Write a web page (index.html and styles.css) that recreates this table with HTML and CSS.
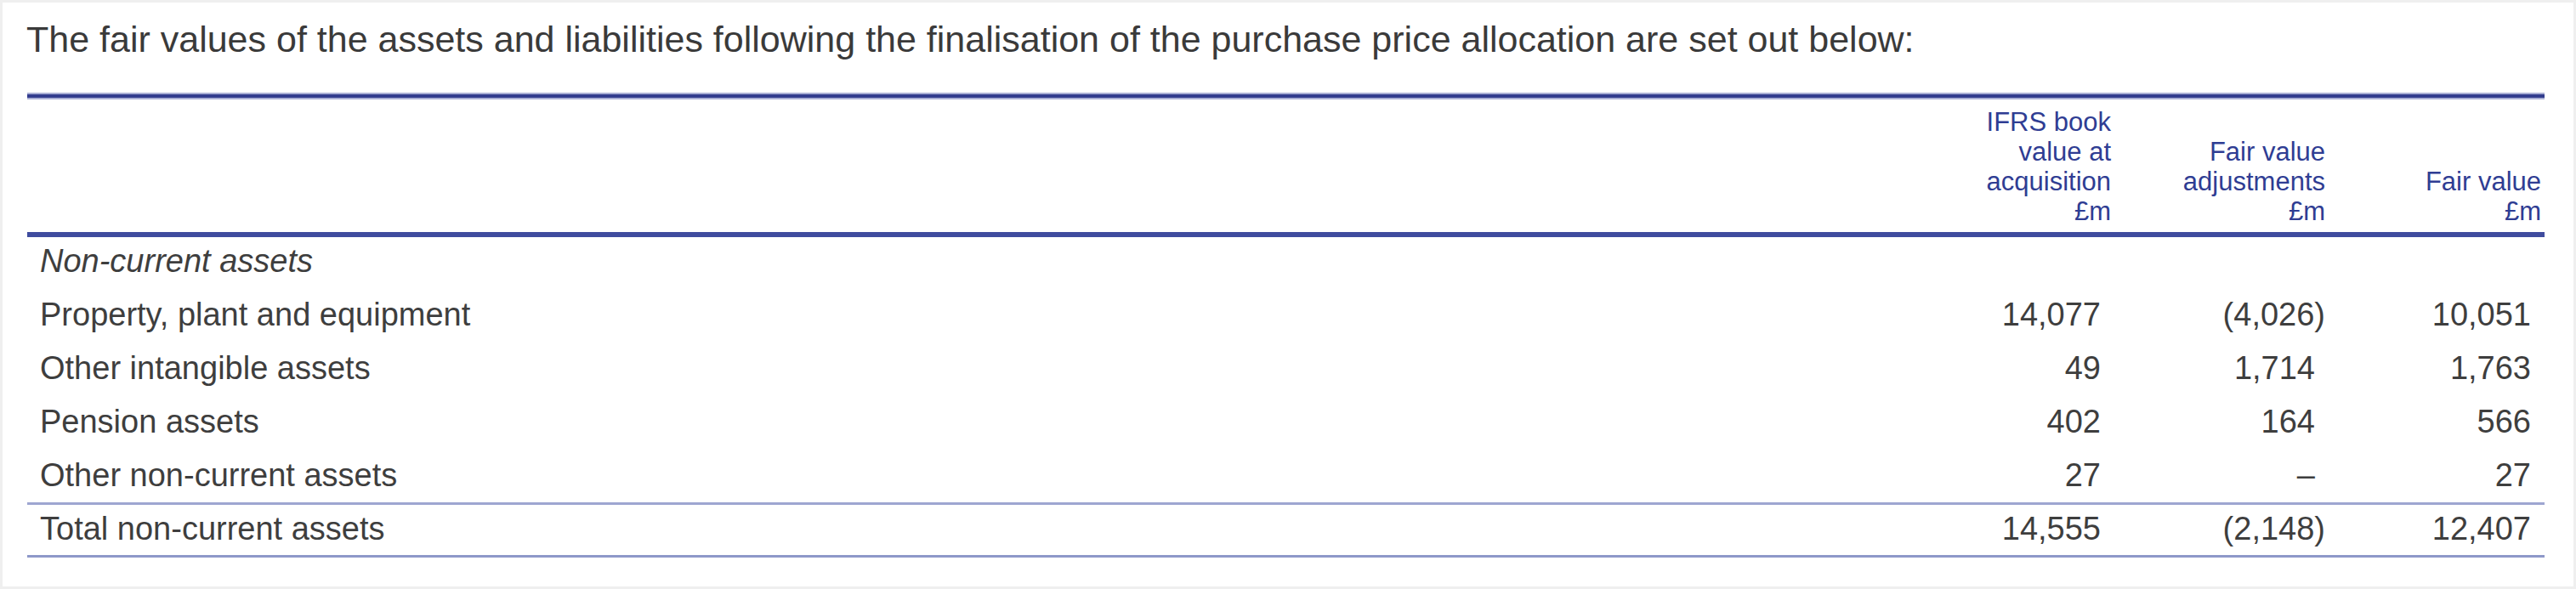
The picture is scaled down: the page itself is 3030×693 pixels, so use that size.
FILE: index.html
```html
<!DOCTYPE html>
<html lang="en">
<head>
<meta charset="utf-8">
<title>Purchase price allocation</title>
<link rel="stylesheet" href="styles.css">
</head>
<body>
<div class="page">
  <p class="intro">The fair values of the assets and liabilities following the finalisation of the purchase price allocation are set out below:</p>
  <div class="fv-table">
    <div class="row head">
      <div class="label"></div>
      <div class="num">IFRS book<br>value at<br>acquisition<br>£m</div>
      <div class="num">Fair value<br>adjustments<br>£m</div>
      <div class="num">Fair value<br>£m</div>
    </div>
    <div class="row section">
      <div class="label">Non-current assets</div>
      <div class="num"></div>
      <div class="num"></div>
      <div class="num"></div>
    </div>
    <div class="row">
      <div class="label">Property, plant and equipment</div>
      <div class="num">14,077</div>
      <div class="num neg">(4,026)</div>
      <div class="num">10,051</div>
    </div>
    <div class="row">
      <div class="label">Other intangible assets</div>
      <div class="num">49</div>
      <div class="num">1,714</div>
      <div class="num">1,763</div>
    </div>
    <div class="row">
      <div class="label">Pension assets</div>
      <div class="num">402</div>
      <div class="num">164</div>
      <div class="num">566</div>
    </div>
    <div class="row last">
      <div class="label">Other non-current assets</div>
      <div class="num">27</div>
      <div class="num">–</div>
      <div class="num">27</div>
    </div>
    <div class="row total">
      <div class="label">Total non-current assets</div>
      <div class="num">14,555</div>
      <div class="num neg">(2,148)</div>
      <div class="num">12,407</div>
    </div>
  </div>
</div>
</body>
</html>
```

FILE: styles.css
```css
html, body {
  margin: 0;
  padding: 0;
  background: #ffffff;
}

.page {
  box-sizing: border-box;
  width: 3030px;
  height: 693px;
  border: 3px solid #efefef;
  background: #ffffff;
  font-family: "Liberation Sans", Arial, sans-serif;
  color: #3e3e3e;
  overflow: hidden;
}

.intro {
  margin: 18px 0 0 28px;
  font-size: 43px;
  line-height: 50px;
  color: #3a3a3a;
}

.fv-table {
  margin: 40px 34px 0 29px;
}

.row {
  display: grid;
  grid-template-columns: 1fr 252px 252px 258px;
  font-size: 38px;
  line-height: 44px;
  padding: 6px 0 13px;
}

.row .label {
  padding-left: 15px;
  white-space: nowrap;
}

.row .num {
  text-align: right;
  padding-right: 12px;
  white-space: nowrap;
}

.row .num:last-child {
  padding-right: 16px;
}

.row .num.neg {
  padding-right: 0;
}

.row.head {
  font-size: 31px;
  line-height: 35px;
  color: #2f3d93;
  padding: 11px 0 7px;
  border-top: 4px solid #323d8e;
  border-bottom: 6px solid #3f4c9e;
  box-shadow: 0 -2px 0 #a9afd4, inset 0 2px 0 #a9afd4;
  align-items: end;
}

.row.head .num {
  padding-right: 0;
}

.row.head .num:last-child {
  padding-right: 4px;
}

.row.section .label {
  font-style: italic;
}

.row.last {
  padding-bottom: 10px;
  border-bottom: 3px solid #9ea6d1;
}

.row.total {
  padding-bottom: 9px;
  border-bottom: 3px solid #8e98c9;
}
```
